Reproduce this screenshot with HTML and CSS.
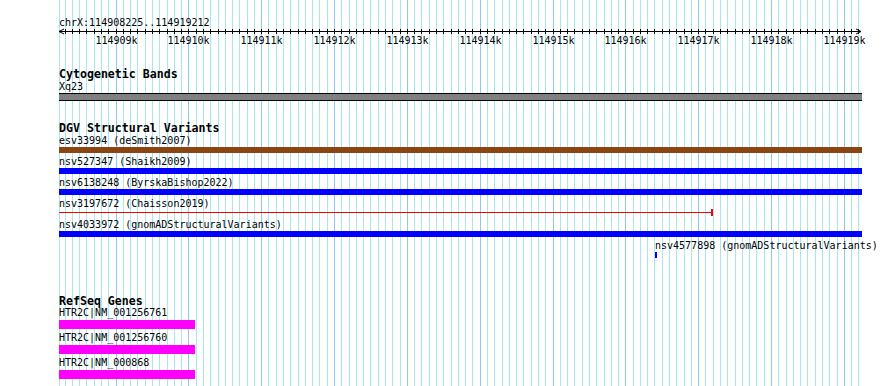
FILE: index.html
```html
<!DOCTYPE html>
<html lang="en">
<head>
    <meta charset="UTF-8">
    <meta name="viewport" content="width=device-width, initial-scale=1.0">
    <title>chrX:114908225..114919212</title>
    <link rel="stylesheet" href="styles.css">
</head>
<body>
    <div class="panel">
        <svg class="grid" id="grid" width="890" height="386"></svg>

        <div class="ruler">
            <div class="ruler-title">chrX:114908225..114919212</div>
            <svg class="scale" id="scale" width="803" height="18"></svg>
        </div>

        <div class="track cyto">
            <div class="track-title">Cytogenetic Bands</div>
            <div class="feat-label">Xq23</div>
            <div class="band"></div>
        </div>

        <div class="track dgv">
            <div class="track-title">DGV Structural Variants</div>
            <div class="feature">
                <div class="feat-label">esv33994 (deSmith2007)</div>
                <div class="bar brown"></div>
            </div>
            <div class="feature">
                <div class="feat-label">nsv527347 (Shaikh2009)</div>
                <div class="bar blue"></div>
            </div>
            <div class="feature">
                <div class="feat-label">nsv6138248 (ByrskaBishop2022)</div>
                <div class="bar blue"></div>
            </div>
            <div class="feature">
                <div class="feat-label">nsv3197672 (Chaisson2019)</div>
                <div class="segment" style="width: 654px">
                    <div class="stroke"></div>
                    <div class="cap"></div>
                </div>
            </div>
            <div class="feature">
                <div class="feat-label">nsv4033972 (gnomADStructuralVariants)</div>
                <div class="bar blue"></div>
            </div>
            <div class="feature" style="margin-left: 596px">
                <div class="feat-label">nsv4577898 (gnomADStructuralVariants)</div>
                <div class="bar blue" style="width: 2px"></div>
            </div>
        </div>

        <div class="track refseq">
            <div class="track-title">RefSeq Genes</div>
            <div class="feature">
                <div class="feat-label">HTR2C|NM_001256761</div>
                <div class="gene"></div>
            </div>
            <div class="feature">
                <div class="feat-label">HTR2C|NM_001256760</div>
                <div class="gene"></div>
            </div>
            <div class="feature">
                <div class="feat-label">HTR2C|NM_000868</div>
                <div class="gene"></div>
            </div>
        </div>
    </div>

    <script>
        const svgNS = "http://www.w3.org/2000/svg";
        const start = 114908225;
        const end = 114919212;
        const left = 59.6;       // pixel de la primera base
        const pxPorBase = 0.07283;
        const toX = (pos) => Math.floor(left + (pos - start) * pxPorBase);

        const grid = document.getElementById("grid");
        const scale = document.getElementById("scale");

        function rect(parent, x, y, w, h, fill) {
            const r = document.createElementNS(svgNS, "rect");
            r.setAttribute("x", x);
            r.setAttribute("y", y);
            r.setAttribute("width", w);
            r.setAttribute("height", h);
            r.setAttribute("fill", fill);
            parent.appendChild(r);
        }

        function label(parent, x, y, txt) {
            const t = document.createElementNS(svgNS, "text");
            t.setAttribute("x", x);
            t.setAttribute("y", y);
            t.setAttribute("text-anchor", "middle");
            t.textContent = txt;
            parent.appendChild(t);
        }

        // borde izquierdo de la grilla
        rect(grid, 59, 0, 1, 386, "#a8e6f0");

        // linea de la regla con flechas
        rect(scale, 0, 2, 802, 1, "#000");
        const flechas = document.createElementNS(svgNS, "path");
        flechas.setAttribute("d", "M0 2.5 L5 0 M0 2.5 L5 5 M802 2.5 L797 0 M802 2.5 L797 5");
        flechas.setAttribute("class", "arrows");
        scale.appendChild(flechas);

        for (let pos = Math.ceil(start / 100) * 100; pos <= end; pos += 100) {
            const x = toX(pos);
            const mayor = pos % 1000 === 0;
            rect(grid, x, 0, 1, 386, mayor ? "#8ec8ee" : "#a8e6f0");
            rect(scale, x - 59, 0, 1, 5, "#000");
            if (mayor) label(scale, x - 59 + 0.5, 15, (pos / 1000) + "k");
        }
    </script>
</body>
</html>
```

FILE: styles.css
```css
* {
    margin: 0;
    padding: 0;
    box-sizing: border-box;
}

body {
    background: #fff;
    color: #000;
    font-family: "DejaVu Sans Mono", "Liberation Mono", monospace;
    font-size: 10px;
}

.panel {
    position: relative;
    isolation: isolate;
    width: 890px;
    height: 386px;
    overflow: hidden;
    padding: 16px 0 0 59px;
    display: flex;
    flex-direction: column;
}

.panel > * {
    flex-shrink: 0;
}

.grid {
    position: absolute;
    top: 0;
    left: 0;
    z-index: -1;
    shape-rendering: crispEdges;
}

.ruler-title {
    line-height: 13px;
    white-space: nowrap;
}

.scale {
    display: block;
    overflow: visible;
    shape-rendering: crispEdges;
    font-family: "DejaVu Sans Mono", "Liberation Mono", monospace;
    font-size: 10px;
}

.scale .arrows {
    fill: none;
    stroke: #000;
    stroke-width: 1;
    shape-rendering: auto;
}

.track {
    width: 803px;
    display: flex;
    flex-direction: column;
}

.track-title {
    font-weight: bold;
    font-size: 11.6px;
    line-height: 12px;
    white-space: nowrap;
}

.feat-label {
    position: relative;
    z-index: 1;
    line-height: 13px;
    white-space: nowrap;
}

.cyto { margin-top: 21px; }
.dgv { margin-top: 21px; gap: 2px; }
.dgv .track-title { margin-bottom: -2px; }
.refseq { margin-top: 37px; gap: 3px; }
.refseq .track-title { margin-bottom: -3px; }

.refseq .feat-label {
    line-height: 12px;
    padding-bottom: 1px;
}

.band {
    height: 8px;
    background: #808080;
    border-top: 1px solid #000;
    border-bottom: 1px solid #000;
}

.bar { height: 6px; }
.brown { background: #8b4513; }
.blue { background: #0000ff; }

.segment {
    display: flex;
    align-items: flex-start;
    height: 6px;
}

.segment .stroke {
    flex: 1;
    height: 1px;
    margin-top: 2px;
    background: #ff0000;
}

.segment .cap {
    width: 2px;
    height: 7px;
    margin-top: -1px;
    background: #ff0000;
}

.gene {
    width: 136px;
    height: 9px;
    background: #ff00ff;
}
```
